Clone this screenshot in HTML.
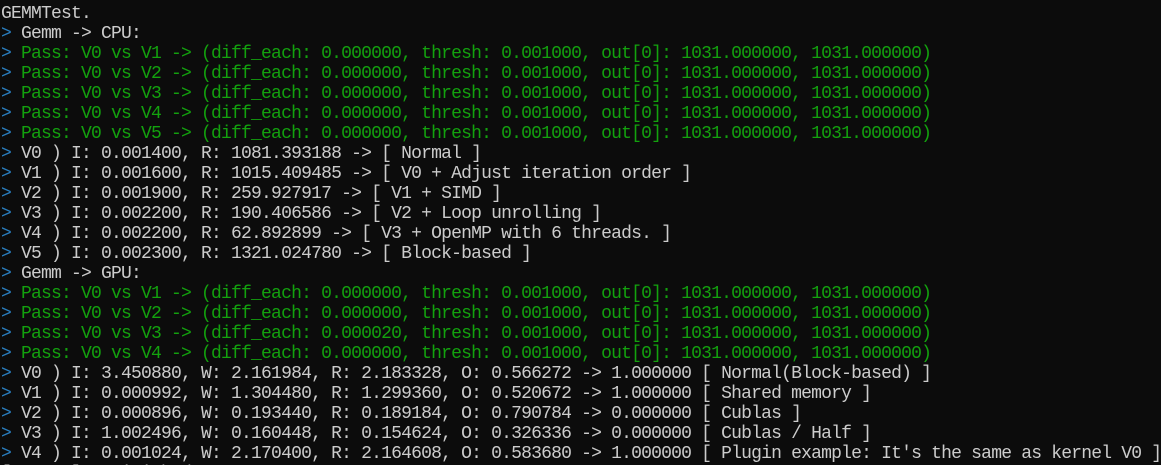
<!DOCTYPE html>
<html><head><meta charset="utf-8"><style>
html,body{margin:0;padding:0;background:#0c0c0c;width:1161px;height:465px;overflow:hidden}
pre{margin:0;padding:4px 0 0 1px;font-family:"Liberation Mono",monospace;font-size:18px;letter-spacing:-0.8px;line-height:20px;color:#cccccc}
.g{color:#13a10e}
.b{color:#2a7fc0}
</style></head><body><pre>GEMMTest.
<span class="b">&gt;</span> Gemm -&gt; CPU:
<span class="b">&gt;</span><span class="g"> Pass: V0 vs V1 -&gt; (diff_each: 0.000000, thresh: 0.001000, out[0]: 1031.000000, 1031.000000)</span>
<span class="b">&gt;</span><span class="g"> Pass: V0 vs V2 -&gt; (diff_each: 0.000000, thresh: 0.001000, out[0]: 1031.000000, 1031.000000)</span>
<span class="b">&gt;</span><span class="g"> Pass: V0 vs V3 -&gt; (diff_each: 0.000000, thresh: 0.001000, out[0]: 1031.000000, 1031.000000)</span>
<span class="b">&gt;</span><span class="g"> Pass: V0 vs V4 -&gt; (diff_each: 0.000000, thresh: 0.001000, out[0]: 1031.000000, 1031.000000)</span>
<span class="b">&gt;</span><span class="g"> Pass: V0 vs V5 -&gt; (diff_each: 0.000000, thresh: 0.001000, out[0]: 1031.000000, 1031.000000)</span>
<span class="b">&gt;</span> V0 ) I: 0.001400, R: 1081.393188 -&gt; [ Normal ]
<span class="b">&gt;</span> V1 ) I: 0.001600, R: 1015.409485 -&gt; [ V0 + Adjust iteration order ]
<span class="b">&gt;</span> V2 ) I: 0.001900, R: 259.927917 -&gt; [ V1 + SIMD ]
<span class="b">&gt;</span> V3 ) I: 0.002200, R: 190.406586 -&gt; [ V2 + Loop unrolling ]
<span class="b">&gt;</span> V4 ) I: 0.002200, R: 62.892899 -&gt; [ V3 + OpenMP with 6 threads. ]
<span class="b">&gt;</span> V5 ) I: 0.002300, R: 1321.024780 -&gt; [ Block-based ]
<span class="b">&gt;</span> Gemm -&gt; GPU:
<span class="b">&gt;</span><span class="g"> Pass: V0 vs V1 -&gt; (diff_each: 0.000000, thresh: 0.001000, out[0]: 1031.000000, 1031.000000)</span>
<span class="b">&gt;</span><span class="g"> Pass: V0 vs V2 -&gt; (diff_each: 0.000000, thresh: 0.001000, out[0]: 1031.000000, 1031.000000)</span>
<span class="b">&gt;</span><span class="g"> Pass: V0 vs V3 -&gt; (diff_each: 0.000020, thresh: 0.001000, out[0]: 1031.000000, 1031.000000)</span>
<span class="b">&gt;</span><span class="g"> Pass: V0 vs V4 -&gt; (diff_each: 0.000000, thresh: 0.001000, out[0]: 1031.000000, 1031.000000)</span>
<span class="b">&gt;</span> V0 ) I: 3.450880, W: 2.161984, R: 2.183328, O: 0.566272 -&gt; 1.000000 [ Normal(Block-based) ]
<span class="b">&gt;</span> V1 ) I: 0.000992, W: 1.304480, R: 1.299360, O: 0.520672 -&gt; 1.000000 [ Shared memory ]
<span class="b">&gt;</span> V2 ) I: 0.000896, W: 0.193440, R: 0.189184, O: 0.790784 -&gt; 0.000000 [ Cublas ]
<span class="b">&gt;</span> V3 ) I: 1.002496, W: 0.160448, R: 0.154624, O: 0.326336 -&gt; 0.000000 [ Cublas / Half ]
<span class="b">&gt;</span> V4 ) I: 0.001024, W: 2.170400, R: 2.164608, O: 0.583680 -&gt; 1.000000 [ Plugin example: It's the same as kernel V0 ]
[ Test ] : Finished.
</pre></body></html>
